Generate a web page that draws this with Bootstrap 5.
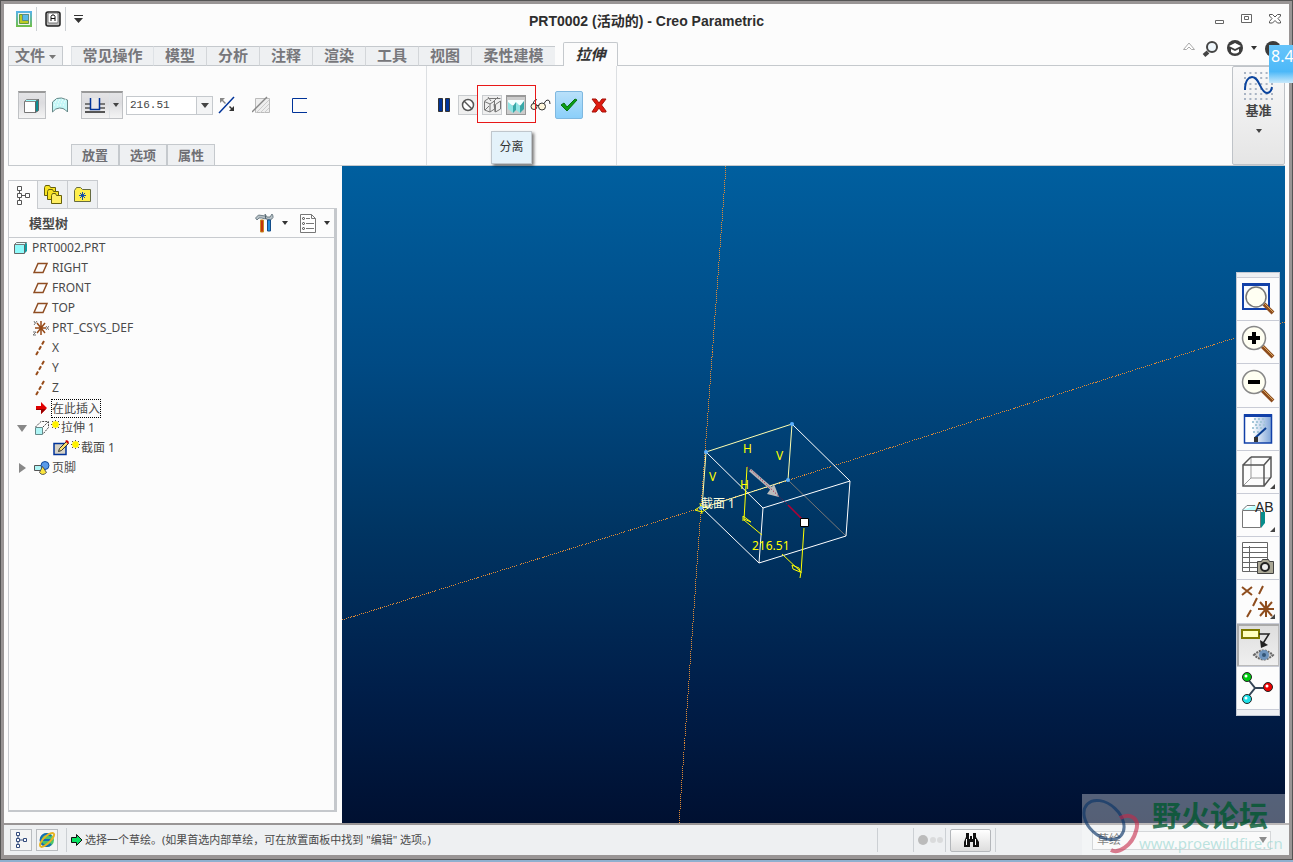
<!DOCTYPE html>
<html lang="zh-CN">
<head>
<meta charset="utf-8">
<meta name="viewport" content="width=device-width, initial-scale=1">
<title>PRT0002 (活动的) - Creo Parametric</title>
<link href="https://cdn.jsdelivr.net/npm/bootstrap@5.3.0/dist/css/bootstrap.min.css" rel="stylesheet">
<style>
body{font-family:"Noto Sans","Noto Sans CJK SC",sans-serif;font-size:12px;line-height:20px;color:#4a4a4a;background:#8fb0cf;padding-bottom:2px;overflow:hidden}
svg{display:block;flex:none}
button{padding:0;border:0;background:none;color:inherit;display:flex;align-items:center;justify-content:center}
.frame{border:1px solid #555;height:100%}
.window{border:3px solid #999595;border-bottom-width:4px;background:#fcfcfc;height:100%}
.titlebar{height:38px;padding:0 8px 0 12px}
.titlebar h1{font:bold 14px/20px "Liberation Sans","Noto Sans CJK SC",sans-serif;color:#2e2e2e;left:0;right:0;top:7px}
.vline{width:1px;height:24px;background:#ccd0d4;flex:none}
.tabrow{height:24px;padding:0 4px;font:bold 15px/18px "Liberation Sans","Noto Sans CJK SC",sans-serif;color:#77777b}
.tabrow a{color:inherit;text-decoration:none;height:20px;background:#eef0f2;border-top:1px solid #c5c9cd;border-bottom:1px solid #c5c9cd;text-align:center;white-space:nowrap}
.tabrow .file-tab{width:55px;border:1px solid #c5c9cd}
.tabrow .fill{border-bottom:1px solid #c5c9cd;height:20px}
.tabrow .tall{height:24px}
.tabrow .w-m{width:53px;border-right:1px solid #d3d6d9}
.tabrow .w-l{width:83px}
.tabrow a.current{height:24px;line-height:24px;width:55px;border:1px solid #c5c9cd;border-bottom:0;border-radius:2px 2px 0 0;background:#fcfcfc;color:#333;font-style:italic}
.ribbon{height:100px;margin:0 4px;border-left:1px solid #c5c9cd;border-bottom:1px solid #c5c9cd}
.feature-group{width:417px}
.tools{height:28px;margin-top:25px}
.feature-group .tools{padding-left:9px}
.pressed{background:linear-gradient(#e4e4e6,#dcdcdf 40%,#f4f4f4);border:1px solid #c0c2c5;border-top:2px solid #999;height:28px}
.solid{width:28px}
.surface{width:28px}
.split{width:42px;margin-left:7px}
.split button{flex:1 1 auto}
.depth{width:87px;height:19px;margin-left:3px;border:1px solid #c5c9cd;background:#fff}
.depth input{border:0;width:69px;height:17px;padding:0 3px;font:11px/17px "Liberation Mono",monospace;color:#444}
.depth button{width:16px;height:17px;border-left:1px solid #c5c9cd;background:#f3f4f5}
.subtabs{margin-left:62px;font:bold 13px/19px "Liberation Sans","Noto Sans CJK SC",sans-serif;color:#6f6f74}
.subtabs button{width:48px;height:21px;border:1px solid #c5c9cd;border-bottom:0;background:#eef0f2;font-weight:bold}
.control-group{width:191px;border-left:1px solid #dcdfe2;border-right:1px solid #dcdfe2;padding-left:11px}
.small-tool{width:20px;height:20px;border:1px solid #c9cccf;background:#efefef}
.small-tool.down{background:#ccc;border-color:#999;border-top-width:2px}
.ok{width:28px;height:28px;border:1px solid #7fb8e0;border-radius:2px;background:linear-gradient(#b9e0fa,#8bcffa)}
.marquee{left:50px;top:19px;width:59px;height:38px;border:1px solid #e81818;pointer-events:none}
.tip{left:64px;top:65px;width:41px;height:33px;border:1px solid #bfc6cc;background:#e4f2fa;box-shadow:2px 2px 3px #0008;line-height:30px;text-align:center;color:#333;z-index:3}
.datum{width:53px;height:99px;border:1px solid #bfc3c8;border-radius:2px;background:linear-gradient(#f8f8f9,#e5e5e5);flex-direction:column;justify-content:flex-start;padding-top:4px;font:bold 13px/20px "Liberation Sans","Noto Sans CJK SC",sans-serif;color:#444}
.net{right:-4px;top:41px;width:24px;height:38px;background:linear-gradient(#66c4fb,#4cb8f8 70%,#c9e9fb);color:#fff;font:16px/22px "Noto Sans",sans-serif;padding-left:2px;z-index:5}
.side{width:338px;padding:14px 5px 11px 4px;flex:none}
.side-tabs button{width:30px;height:29px;border:1px solid #c8cbcf;border-left:0;background:#eef0f2}
.side-tabs button:first-child{border-left:1px solid #c8cbcf;background:#fcfcfc;border-bottom:0}
.side-tabs .rest{border-bottom:1px solid #c8cbcf}
.tree-panel{border:1px solid #c8cbcf;border-top:0;border-right:3px solid #c5c8cc;border-bottom:2px solid #c5c8cc}
.tree-head{height:29px;border-bottom:1px solid #c8cbcf;padding:0 4px 0 20px;font-weight:bold;font-size:13px}
.tree li{height:20px;display:flex;align-items:center}
.tree .l0{padding-left:5px;gap:5px}
.tree .l1{padding-left:24px;gap:3px}
.tree .node{padding-left:8px;gap:7px}
.tree .node span{display:flex;align-items:center;gap:1px}
.tree .l2{padding-left:44px;gap:1px}
.insert{outline:1px dotted #000;line-height:17px}
.scene{background:linear-gradient(#005f9f,#004a84 30%,#003563 55%,#001e49 80%,#001031);margin-right:4px;min-width:0}
.viewbar{right:5px;top:106px;width:44px;height:444px;background:#eef0f3;border:1px solid #c3c9d4;padding:4px 0 5px}
.viewbar button{width:42px;background:#fcfcfc;border-bottom:1px solid #c9ccd6;flex:1 1 0}
.viewbar button:first-child{border-top:1px solid #c9ccd6}
.viewbar button.on{background:linear-gradient(#ddd,#f0f0f0);box-shadow:inset 2px 2px #aaa,inset -1px -1px #bbb}
.status{height:32px;border-top:2px solid #999595;background:#eef0f2;padding:0 18px 0 6px}
.status .box{width:22px;height:22px;border:1px solid #b9bcc0;background:#f4f4f4}
.message{font-size:11px;padding-left:2px}
.monitor{width:31px;padding-left:4px}
.find{width:41px;height:23px;border:1px solid #b4b7bb;border-radius:2px;background:linear-gradient(#fff,#ddd)}
.filter{margin-left:96px}
.status .spacer{width:35px}
.status select{width:179px;height:19px;border:1px solid #c0c3c6;background:#f8f8f8;font-size:12px;line-height:16px;color:#444;padding:0 4px;appearance:none}
.brand{right:0;bottom:0;width:207px;height:61px;background:#ffffff55;pointer-events:none;z-index:4}
.brand b{position:absolute;left:70px;top:1px;font:bold 29px/38px "Noto Sans CJK SC",sans-serif;color:#00572fcc;white-space:nowrap}
.brand span{position:absolute;left:57px;top:39px;font:15px/20px "Noto Sans",sans-serif;color:#9fd8d3b0;white-space:nowrap}
</style>
</head>
<body class="vh-100">
<div class="frame">
<div class="window d-flex flex-column position-relative">
  <header class="titlebar d-flex align-items-center position-relative flex-shrink-0">
    <h1 class="position-absolute text-center m-0">PRT0002 (活动的) - Creo Parametric</h1>
    <div class="d-flex align-items-center pb-2 position-relative">
      <button aria-label="窗口"><svg width="16" height="16"><defs><linearGradient id="app" x2="0" y2="1"><stop stop-color="#55b2ee"/><stop offset="1" stop-color="#70bf45"/></linearGradient></defs><path fill="url(#app)" d="M0 0h16v16H0z"/><path fill="#eef3f0" d="M2 2h12v12H2z"/><path fill="#bccb22" stroke="#639a3f" d="M3.500 3.500h9v9h-9z"/><path fill="#57b9e8" stroke="#568c8a" d="M6.500 3.500h6v6h-6z"/></svg></button>
      <span class="vline ms-1"></span>
      <button class="ms-2 ps-0" aria-label="字体"><svg width="16" height="16"><rect x="1" y="1" width="14" height="14" rx="2" fill="#bbb" stroke="#222" stroke-width="1.500"/><rect x="3" y="2" width="10" height="10" rx="1" fill="#fff" stroke="#777"/><path fill="none" stroke="#111" d="M6 10V5.500L7 4h2l1 1.500V10M6 7.500h4"/></svg></button>
      <span class="vline ms-1"></span>
      <button class="ms-2" aria-label="自定义"><svg width="9" height="8"><path fill="#333" d="M0 0h9v1H0zM0 3h9L4.500 8z"/></svg></button>
    </div>
    <div class="d-flex gap-3 ms-auto position-relative pb-2">
      <button aria-label="最小化"><svg width="10" height="12"><path fill="#fff" stroke="#666" d="M.5 7.500h8v3h-8z"/></svg></button>
      <button aria-label="最大化"><svg width="12" height="12"><path fill="#fff" stroke="#666" d="M.5 1.500h10v8H.5zM3.500 3.500h4v3h-4z"/></svg></button>
      <button aria-label="关闭"><svg width="12" height="12"><path fill="#fff" stroke="#555" d="M.5 1.500h3L6 4l2.500-2.500h3V3L9 5.500l2.500 3V10h-3L6 7.500 3.500 10h-3V8.500L3 5.500.5 3z"/></svg></button>
    </div>
  </header>

  <nav class="tabrow d-flex align-items-end flex-shrink-0">
    <a href="#" class="file-tab">文件<svg class="d-inline-block ms-1" width="7" height="5"><path fill="#777" d="M0 0h7L3.500 4z"/></svg></a>
    <span class="fill pe-2"></span>
    <a href="#" class="w-l border-start border-end">常见操作</a>
    <a href="#" class="w-m">模型</a><a href="#" class="w-m">分析</a><a href="#" class="w-m">注释</a><a href="#" class="w-m">渲染</a><a href="#" class="w-m">工具</a><a href="#" class="w-m">视图</a>
    <a href="#" class="w-l">柔性建模</a>
    <span class="fill pe-2"></span>
    <a href="#" class="current">拉伸</a>
    <div class="fill tall flex-grow-1 d-flex justify-content-end align-items-start">
      <button class="me-2" aria-label="折叠功能区"><svg width="12" height="10"><path fill="#fff" stroke="#aaa" d="M.5 7.500L6 1l5.500 6.500h-3L6 5 3.500 7.500z"/></svg></button>
      <button class="me-2" aria-label="搜索"><svg width="16" height="16" class="overflow-visible"><circle cx="9" cy="5" r="5" fill="#eef6fb" stroke="#444" stroke-width="2"/><path stroke="#444" stroke-width="4" d="M1 13.500L5 10"/></svg></button>
      <button class="me-2" aria-label="学习"><svg width="16" height="16" class="overflow-visible"><circle cx="8" cy="6" r="8" fill="#3c3c3c"/><path fill="#fff" d="M2 4l6-3 6 3-6 3zM4 7l4 2 4-2v3q-4 3-8 0z"/></svg></button>
      <button class="me-2" aria-label="更多"><svg width="6" height="14"><path fill="#333" d="M0 4h6L3 8z"/></svg></button>
      <button class="me-1" aria-label="帮助"><svg width="16" height="16" class="overflow-visible"><circle cx="8" cy="7" r="8" fill="#3c3c3c"/></svg></button>
    </div>
  </nav>

  <section class="ribbon d-flex flex-shrink-0">
    <div class="feature-group d-flex flex-column justify-content-between">
      <div class="tools d-flex align-items-center">
        <button class="pressed solid" aria-label="实体"><svg width="18" height="18"><path fill="#fff" stroke="#777" d="M1.500 4.500h11v11h-11z"/><path fill="#9ff" stroke="#888" d="M1.500 4.500l2-2h12l-3 2z"/><path fill="#0a8e93" stroke="#666" d="M12.500 4.500l3-2v11l-3 2z"/></svg></button>
        <button class="surface" aria-label="曲面"><svg width="18" height="18"><path fill="#c4f7f7" stroke="#688" d="M1.500 16V6q4-5 9-4l6 2v12l-2-2q-2-2-6-2-4 0-7 4z"/><path stroke="#fff" stroke-dasharray="1 2" d="M4 6h11M3 9h12M5 4h10"/></svg></button>
        <div class="pressed split d-flex">
          <button aria-label="深度"><svg width="20" height="18"><path fill="none" stroke="#777" stroke-width="2" d="M0 7h5M15 7h5M0 11h20"/><path fill="#555" d="M0 14h20v2H0z"/><path fill="#e8e8e8" stroke="#039" stroke-width="1.500" d="M5.500 1v11.500h9V1"/></svg></button>
          <button class="border-start" aria-label="深度选项"><svg width="6" height="12"><path fill="#444" d="M0 3h6L3 7z"/></svg></button>
        </div>
        <div class="depth d-flex"><input aria-label="深度值" value="216.51"><button aria-label="深度列表"><svg width="8" height="5"><path fill="#444" d="M0 0h8L4 5z"/></svg></button></div>
        <button class="ms-1" aria-label="反向"><svg width="19" height="18"><path stroke="#039" stroke-width="1.500" d="M2 17L17 1"/><path fill="#888" d="M3 2h5L6 4l3 3-1 1-3-3-2 2z"/><path fill="#333" d="M17 15h-5l2-2-2-2 1-1 2 2 2-2z"/></svg></button>
        <button class="ms-3" aria-label="移除材料"><svg width="20" height="18"><path fill="#eee" stroke="#bbb" d="M3.500 2.500h14v14h-14z"/><path stroke="#ccc" d="M4 17L17 4M8 17l9-9M12 17l5-5"/><path stroke="#888" stroke-width="1.500" d="M0 16L15 1"/></svg></button>
        <button class="ms-3 ps-1" aria-label="加厚"><svg width="16" height="18"><path fill="none" stroke="#003399" d="M15 2.500H.5v14H15"/></svg></button>
      </div>
      <div class="subtabs d-flex"><button>放置</button><button>选项</button><button>属性</button></div>
    </div>
    <div class="control-group position-relative">
      <div class="tools d-flex align-items-center">
        <button aria-label="暂停"><svg width="12" height="14"><path fill="#039" stroke="#333" d="M.5.5h4v13h-4zM7.500.5h4v13h-4z"/></svg></button>
        <button class="small-tool ms-2" aria-label="无预览"><svg width="14" height="14"><circle cx="7" cy="7" r="5.500" fill="#fff" stroke="#555" stroke-width="1.500"/><path stroke="#555" stroke-width="1.500" d="M3 3l8 8"/></svg></button>
        <button class="small-tool ms-1" aria-label="分离"><svg width="19" height="18"><path fill="none" stroke="#777" d="M1.500 14V5.500L7 8v8zM7 8l4.500-3v8L7 16M12.500 16l5-3V5l-5 3.500zM1.500 5l4-2.500h12M5 1l3 4M15 1l-5 5M11 8l1 8M2 14l4-4"/></svg></button>
        <button class="small-tool down ms-1" aria-label="连接"><svg width="18" height="16"><path fill="#f4ffff" d="M1 2h16v5H1z"/><path fill="#8fe4e4" d="M1 4l5 4v7l-5-4z"/><path fill="#38a8a8" d="M6 8l3-4v8l-3 3z"/><path fill="#8fe4e4" d="M9 4l4 4v7l-4-3z"/><path fill="#38a8a8" d="M13 8l4-5v8l-4 4z"/></svg></button>
        <button class="ms-1" aria-label="验证"><svg width="21" height="14"><g fill="#fff7dc" stroke="#333"><circle cx="4" cy="8.500" r="3"/><circle cx="12" cy="8.500" r="3.500"/><path fill="none" d="M3 5.500q1-4 4-4M14 5.500q2-4 4-3.500 2 0 2 4M7 7.500h2"/></g></svg></button>
        <button class="ok ms-1" aria-label="确定"><svg width="18" height="14"><path fill="#0a9e16" stroke="#087010" d="M1 7l3-2 3 4 8-8 2 1-10 11z"/></svg></button>
        <button class="ms-2" aria-label="取消"><svg width="16" height="15"><path fill="#e01b10" stroke="#a51208" d="M1 1h4l3 4 3-4h4l-4.500 6L15 13v1h-4L8 10l-3 4H1l4.500-7z"/></svg></button>
      </div>
      <div class="marquee position-absolute"></div>
      <div class="tip position-absolute" role="tooltip">分离</div>
    </div>
    <button class="datum ms-auto"><svg width="29" height="30"><path stroke="#a9b4c4" stroke-width="2" stroke-dasharray="2 3.400" d="M0 2h29M0 7h29M0 13h29M0 18h29M0 23h29M0 28h29"/><path fill="none" stroke="#0b449e" stroke-width="2" d="M1 19C1 9 5 6 8 6c8 0 8 16 15 16q4 0 5-6"/></svg><span>基准</span><svg class="mt-2" width="6" height="5"><path fill="#444" d="M0 0h6L3 4z"/></svg></button>
  </section>

  <main class="d-flex flex-grow-1 overflow-hidden">
    <aside class="side d-flex flex-column">
      <div class="side-tabs d-flex">
        <button aria-label="模型树"><svg width="14" height="19"><path fill="#fff" stroke="#555" d="M1.500.5h4v4h-4zM1.500 7.500h4v4h-4zM1.500 14.500h4v4h-4zM9.500 7.500h4v4h-4zM3.500 4.500v3M3.500 11.500v3M5.500 9.500h4"/></svg></button>
        <button aria-label="文件夹浏览器"><svg width="20" height="20"><g fill="#f8e321" stroke="#66600a"><path d="M1.500 10.500v-8l1-2h4l1 2h5v8z"/><path d="M4.500 14.500v-8l1-2h4l1 2h5v8z"/><path fill="#ffee62" d="M8.500 18.500v-8l1-2h3l1 2h5v8z"/></g></svg></button>
        <button aria-label="收藏夹"><svg width="18" height="16"><path fill="#ffef4c" stroke="#666b40" d="M.5 14.500v-11l2-3h4l2 2h8v12z"/><path stroke="#124dab" d="M8.500 5v8M5 8.500h7M6 6l5 5M11 6l-5 5"/></svg></button>
        <span class="rest flex-grow-1"></span>
      </div>
      <div class="tree-panel flex-grow-1">
        <div class="tree-head d-flex align-items-center"><span>模型树</span>
          <button class="ms-auto" aria-label="设置"><svg width="19" height="20"><path fill="#b6c0c6" stroke="#465963" stroke-width=".7" d="M.5 5l3-3 7 1v3l-4-1H4L2 7zM10 1l2 3h3l2-3q3 4-2 6l-4-1z"/><path fill="#c33310" stroke="#c98a20" d="M5.500 7h3v12h-3z"/><path fill="#248ee0" stroke="#124c88" d="M12.500 7h3v11h-3z"/></svg></button>
          <button class="ms-2" aria-label="设置菜单"><svg width="6" height="4"><path fill="#333" d="M0 0h6L3 4z"/></svg></button>
          <button class="ms-2 ps-1" aria-label="显示"><svg width="16" height="19"><path fill="#fff" stroke="#777" d="M.5.5h11l4 4v14H.5zM11.500.5v4h4"/><path stroke="#777" d="M6 4.500h4M6 9.500h8M6 14.500h8"/><g fill="#fff" stroke="#444"><circle cx="3.500" cy="4.500" r="1"/><circle cx="3.500" cy="9.500" r="1"/><circle cx="3.500" cy="14.500" r="1"/></g></svg></button>
          <button class="ms-2" aria-label="显示菜单"><svg width="6" height="4"><path fill="#333" d="M0 0h6L3 4z"/></svg></button>
        </div>
        <svg width="0" height="0" class="position-absolute"><defs>
          <g id="plane"><path fill="none" stroke="#8f4d22" stroke-width="1.500" d="M5 1.500h9l-4 9H1z"/></g>
          <g id="axis"><path stroke="#964a18" stroke-width="2" stroke-dasharray="4 2" d="M11 1L3 15"/></g>
          <g id="spark"><path stroke="#555" d="M4.500 0v9M0 4.500h9M1 1l7 7M8 1L1 8"/><path stroke="#fff200" stroke-width="2" d="M4.500 1v7M1 4.500h7M2 2l5 5M7 2L2 7"/></g>
        </defs></svg>
        <ul class="tree list-unstyled m-0">
          <li class="l0"><svg width="13" height="12"><path fill="#8ffbfb" stroke="#666" d="M.5 2.500h10v9H.5z"/><path fill="#dff" stroke="#777" d="M.5 2.500l2-2h10l-2 2z"/><path fill="#109ca0" d="M11 2l2-1v8l-2 2z"/></svg>PRT0002.PRT</li>
          <li class="l1"><svg width="16" height="12"><use href="#plane"/></svg>RIGHT</li>
          <li class="l1"><svg width="16" height="12"><use href="#plane"/></svg>FRONT</li>
          <li class="l1"><svg width="16" height="12"><use href="#plane"/></svg>TOP</li>
          <li class="l1"><svg width="16" height="16"><path stroke="#964a18" stroke-width="1.500" d="M2 8h11M8 1v14M4 3l8 10M12 3L4 13"/><path fill="none" stroke="#777" d="M1 1l1 2M4 1L1 5M0 12h3l-3 3h3M13 6l3 4M16 6l-3 4"/></svg>PRT_CSYS_DEF</li>
          <li class="l1"><svg width="16" height="16"><use href="#axis"/></svg>X</li>
          <li class="l1"><svg width="16" height="16"><use href="#axis"/></svg>Y</li>
          <li class="l1"><svg width="16" height="16"><use href="#axis"/></svg>Z</li>
          <li class="l1"><svg width="16" height="12"><path fill="#e00000" d="M3 4h5V0l6 6-6 6V8H3z"/><path fill="#900" d="M3 7h10l-5 5V8H3z"/></svg><span class="insert">在此插入</span></li>
          <li class="node"><svg width="10" height="7"><path fill="#888" d="M0 0h10L5 7z"/></svg><span><svg width="16" height="14"><path fill="#aff5f5" stroke="#688" d="M1.500 6.500h7v7h-7z"/><path fill="none" stroke="#444" stroke-dasharray="2 1" d="M1.500 6L7 .5h7.500v6L9 13M9 6l5-5"/></svg><svg class="mb-2" width="9" height="9"><use href="#spark"/></svg>拉伸 1</span></li>
          <li class="l2"><svg width="17" height="16"><path fill="#d6d2c6" stroke="#039" stroke-width="1.500" d="M1 3.500h12v11H1z"/><path fill="#fbe06a" stroke="#333" d="M5.500 11.500l1-3 7-7 2 2-7 7z"/><path fill="#c00" d="M12 1l2-1 2 2-1 2z"/></svg><svg class="mb-2" width="9" height="9"><use href="#spark"/></svg>截面 1</li>
          <li class="node"><svg width="10" height="10"><path fill="#888" d="M2 0l7 5-7 5z"/></svg><span><svg width="17" height="14"><path fill="#aff5f5" stroke="#555" d="M.5 4.500h9v5h-9z"/><circle cx="11" cy="4.500" r="4" fill="#5a9ae8" stroke="#124a9c"/><path fill="#fbe53d" stroke="#555" d="M8.500 5.500l4 6q-4 4-7 0z"/></svg>页脚</span></li>
        </ul>
      </div>
    </aside>

    <section class="scene flex-grow-1 position-relative">
      <svg width="100%" height="100%" viewBox="342 166 943 657" preserveAspectRatio="xMidYMid slice" font-family="Noto Sans, Noto Sans CJK SC, sans-serif" font-size="12">
        <g fill="none" stroke="#e08a35" stroke-dasharray="1 1" shape-rendering="crispEdges"><path d="M726 166L701 508 679 823M342 620l359-112L1285 322"/></g>
        <path stroke="#777" d="M788 480l58 56"/>
        <g fill="none" stroke="#fff"><path d="M792 424l58 57-4 55-87 27-57-55M706 452l57 56 87-27M763 508l-4 55"/></g>
        <path fill="none" stroke="#ffffb0" d="M706 452l86-28-4 56-86 28z"/>
        <path fill="none" stroke="#ff0" d="M747 467l-3 53 18 15M743 521v-5l8 6-7-3M782 554l19 18-1 6M804 528l-3 45M792 565l7 3 1 4-7-3zM695 510l6-4 7 2-6 4zM700 503l2 11"/>
        <path stroke="#b5b5b5" stroke-width="3" d="M750 470l23 20"/><path fill="#bbb" d="M774 484l5 13-12-3z"/>
        <path stroke="#b00034" stroke-width="1.500" d="M788 505l14 14"/><path stroke="#b00034" stroke-dasharray="1 2" d="M747 466l41 39"/>
        <g fill="#5ab0ff"><circle cx="706" cy="452" r="2"/><circle cx="792" cy="424" r="2"/><circle cx="788" cy="480" r="2"/><circle cx="701" cy="508" r="2"/></g>
        <path fill="#fff" stroke="#000" d="M800.500 518.500h8v8h-8z"/>
        <g fill="#ff0"><text x="743" y="453">H</text><text x="776" y="460">V</text><text x="709" y="481">V</text><text x="740" y="489">H</text><text x="752" y="550">216.51</text></g>
        <text x="701" y="508" fill="#ffffdf">截面 1</text>
      </svg>
      <div class="viewbar position-absolute d-flex flex-column">
        <button aria-label="重新调整"><svg width="34" height="34"><path fill="#f8fbff" stroke="#1140a8" stroke-width="2" d="M2 2h26v25H2z"/><path fill="#1140a8" d="M1 1h28v3H1z"/><path stroke="#8e4d1e" stroke-width="4" d="M23 22l9 9"/><path stroke="#d9a860" d="M23 21l9 9"/><circle cx="15" cy="15" r="10" fill="#fffff2" stroke="#777" stroke-width="1.500"/></svg></button>
        <button aria-label="放大"><svg width="34" height="34"><path stroke="#8e4d1e" stroke-width="4" d="M21 21l11 11"/><path stroke="#d9a860" d="M22 21l10 10"/><circle cx="13" cy="13" r="11.500" fill="#fffff2" stroke="#888" stroke-width="1.500"/><path stroke="#000" stroke-width="4" d="M7 13h12M13 7v12"/></svg></button>
        <button aria-label="缩小"><svg width="34" height="34"><path stroke="#8e4d1e" stroke-width="4" d="M21 21l11 11"/><path stroke="#d9a860" d="M22 21l10 10"/><circle cx="13" cy="13" r="11.500" fill="#fffff2" stroke="#888" stroke-width="1.500"/><path stroke="#000" stroke-width="4" d="M7 13h12"/></svg></button>
        <button aria-label="重画"><svg width="30" height="32"><defs><linearGradient id="rep"><stop offset=".3" stop-color="#fff"/><stop offset="1" stop-color="#7fa5d8"/></linearGradient></defs><path fill="url(#rep)" stroke="#1140a8" stroke-width="1.500" d="M1.500 2h27v28h-27z"/><path fill="#1140a8" d="M1 1h28v3H1z"/><path stroke="#a5c6d8" stroke-width="2" stroke-dasharray="2 2" d="M9 9h13M11 6h10M9 15h10M12 12h12M10 19h7"/><path stroke="#0a3d91" stroke-width="2" d="M12 25l11-10"/><path fill="#333" d="M11 24h4v5h-4z"/></svg></button>
        <button aria-label="显示样式"><svg width="34" height="34"><path fill="none" stroke="#999" d="M10 2v21h20M10 23l-8 8"/><path fill="none" stroke="#555" stroke-width="1.500" d="M2 10h21v21H2zM10 2h20v20L23 31M2 10l8-8M23 10l7-8"/><path fill="#444" d="M34 29v5h-5z"/></svg></button>
        <button aria-label="已命名视图"><svg width="34" height="34"><path fill="#bff" d="M1 12l5-5h9v5z"/><path fill="#fff" stroke="#777" d="M1.500 12.500h18v17h-18zM1.500 12L6 7.500h8"/><path fill="#078d8c" d="M20 14h4v11l-4 5z"/><text x="14" y="14" font-family="Liberation Sans" font-size="14" fill="#222">AB</text><path fill="#444" d="M34 29v5h-5z"/></svg></button>
        <button aria-label="视图管理器"><svg width="34" height="34"><path fill="#fff" stroke="#666" d="M1.500 1.500h25v29h-25zM1.500 6.500h25M1.500 11.500h25M1.500 16.500h25M1.500 21.500h25M1.500 26.500h25M8.500 5v26"/><path fill="#aaa795" stroke="#444" d="M16.500 20.500h4l1-2h6l1 2h4v12h-16z"/><circle cx="24" cy="26" r="4" fill="#eee" stroke="#222" stroke-width="2"/></svg></button>
        <button aria-label="基准显示"><svg width="34" height="34"><path stroke="#8e4d1e" stroke-width="2" d="M1 2l10 8M11 2L1 10M22 1l-4 8M16 13l-4 8M10 25l-4 7M17 24h16M25 16v16M19 17l12 14M31 17L19 31"/><path fill="#444" d="M34 29v5h-5z"/></svg></button>
        <button class="on" aria-label="注释显示"><svg width="34" height="34"><path fill="#ffffbf" stroke="#7d7900" stroke-width="2" d="M1 2h17v8H1z"/><path fill="none" stroke="#222" stroke-width="1.500" d="M18 6h10l-7 11"/><path fill="#222" d="M19 12l1 8 7-3z"/><path fill="#ccc" stroke="#666" stroke-width="2" stroke-dasharray="2 1" d="M13 27q9-9 19 0-9 9-19 0z"/><circle cx="23" cy="27" r="5" fill="#6e94bd"/><circle cx="23" cy="27" r="2" fill="#357"/></svg></button>
        <button aria-label="旋转中心"><svg width="34" height="34"><path fill="none" stroke="#345" stroke-width="2" d="M6 7l8 10-8 10M14 17h12"/><g stroke="#222"><circle cx="6" cy="6" r="4.500" fill="#0c1"/><circle cx="27" cy="16" r="4.500" fill="#e00"/><circle cx="6" cy="28" r="4.500" fill="#1de0e8"/></g><g fill="#fff"><circle cx="5" cy="5" r="1.500"/><circle cx="26" cy="15" r="1.500"/><circle cx="5" cy="27" r="1.500"/></g></svg></button>
      </div>
    </section>
  </main>

  <footer class="status d-flex align-items-center flex-shrink-0">
    <button class="box" aria-label="显示导航器"><svg width="12" height="17"><path fill="#fff" stroke="#334a7c" d="M1.500.5h3v3h-3zM1.500 6.500h3v3h-3zM1.500 12.500h3v3h-3zM8.500 6.500h3v3h-3zM3 4v2M3 10v2M5 8h3"/></svg></button>
    <button class="box ms-1" aria-label="显示浏览器"><svg width="18" height="18"><circle cx="9" cy="9" r="7" fill="#4cc46b"/><path fill="none" stroke="#1469b8" stroke-width="2" d="M13 5a6 6 0 1 0 0 8M5 9h9"/><path fill="none" stroke="#e8b322" stroke-width="2" d="M3 16C-2 12 14-2 16 3 17 6 8 16 3 16"/></svg></button>
    <span class="vline ms-2 me-1"></span>
    <svg width="12" height="12"><path fill="#08e060" stroke="#111" d="M.5 3.500h5v-3L11 6l-5.500 5.500v-3h-5z"/></svg>
    <span class="message text-nowrap">选择一个草绘。(如果首选内部草绘，可在放置面板中找到 "编辑" 选项。)</span>
    <span class="vline ms-auto"></span>
    <span class="spacer"></span>
    <span class="vline"></span>
    <span class="monitor"><svg width="26" height="12"><circle cx="5" cy="6" r="5" fill="#bbb"/><circle cx="15" cy="6" r="3" fill="#dadbdc"/><circle cx="22" cy="6" r="3" fill="#dadbdc"/></svg></span>
    <span class="vline me-1"></span>
    <button class="find" aria-label="查找"><svg width="16" height="16"><path fill="#111" d="M3 1h3v3h4V1h3v4l3 5v5h-6v-5H7v5H1v-5l2-5z"/><path stroke="#fff" d="M3.500 7v6M12.500 7v6M6.500 3v4M9.500 3v4"/></svg></button>
    <span class="vline ms-1"></span>
    <span class="filter position-relative"><select aria-label="选择过滤器" class="d-block"><option>草绘</option></select><svg class="position-absolute end-0 top-50 translate-middle-y me-1" width="8" height="6"><path fill="#555" d="M0 0h8L4 6z"/></svg></span>
  </footer>

  <div class="net position-absolute">8.4</div>
  <div class="brand position-absolute">
    <svg width="62" height="61"><g fill="none"><ellipse cx="22" cy="26" rx="23" ry="16" transform="rotate(43 22 26)" stroke="#0b3467" stroke-width="3" opacity=".65"/><path stroke="#c42848" stroke-width="4" opacity=".6" d="M38 24C49 18 58 25 54 37 50 52 36 60 29 56"/></g></svg>
    <b>野火论坛</b><span>www.proewildfire.cn</span>
  </div>
</div>
</div>
<script src="https://cdn.jsdelivr.net/npm/bootstrap@5.3.0/dist/js/bootstrap.bundle.min.js"></script>
</body>
</html>
